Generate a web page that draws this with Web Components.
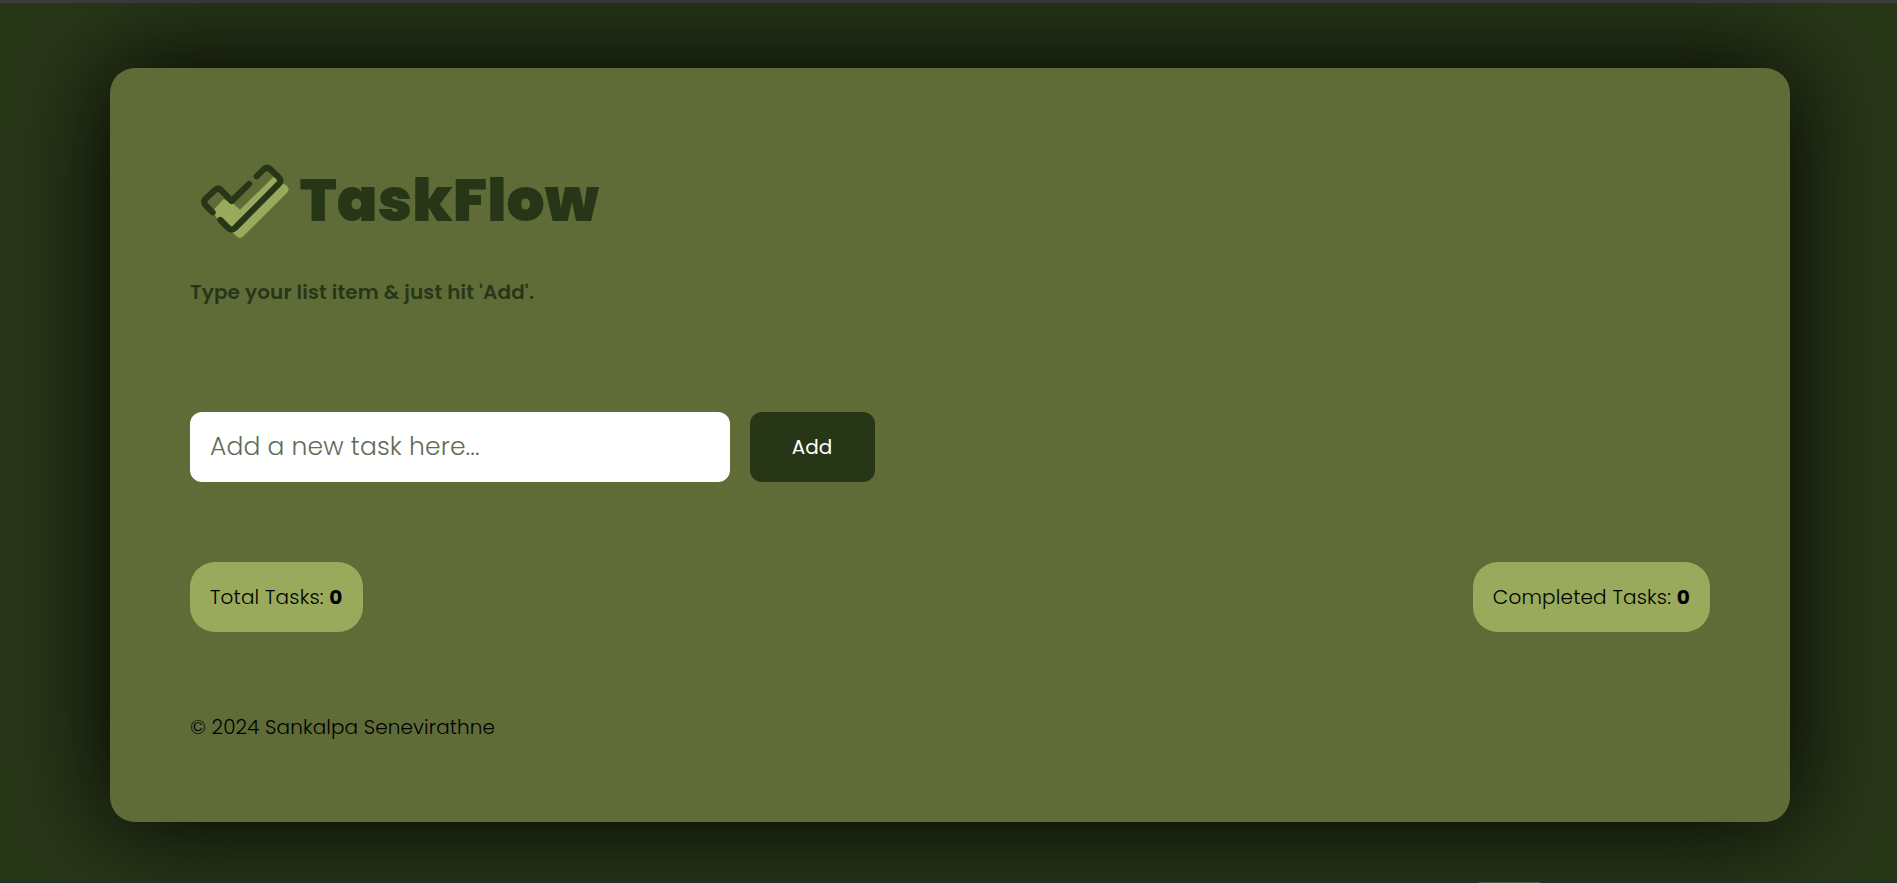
<!DOCTYPE html>
<html lang="en">
<head>
<meta charset="utf-8">
<title>TaskFlow</title>
<style>
html,body{margin:0;height:100%;overflow:hidden;background:#283618}
body{font-family:Poppins,Inter,sans-serif;color:#000}
</style>
</head>
<body>
<task-app></task-app>
<script>
const define=(name,html)=>customElements.define(name,class extends HTMLElement{
  connectedCallback(){
    if(!this.shadowRoot)this.attachShadow({mode:'open'}).innerHTML=html;
  }
});

define('task-logo',`<style>
:host{display:flex;height:100px}
svg{width:130px;height:100px;margin-left:-10px;flex:none}
h1{margin:0 0 0 -10.3px;font-size:60px;font-weight:900;line-height:100px;color:#283618}
</style>
<svg viewBox="0 0 390 300" fill="none" stroke-linecap="round" stroke-linejoin="round">
<path fill="#99aa5c" d="M103 177L130 148L155 157L180 179L281 80L321 108Q331 118 321 128L190 259Q180 269 170 259L110 203Q100 190 103 177Z"/>
<g stroke="#283618" stroke-width="18.5">
<path d="M98 187L77 166Q68 156 77 146L104 121Q114 112 124 121L155 153L207 102"/>
<path d="M230 79L251 58Q261 49 271 58L296 82Q306 92 296 102L165 234Q155 243 145 234L121 210"/>
</g></svg>
<h1>TaskFlow</h1>`);

define('task-entry',`<style>
:host{display:flex;gap:20px;height:70px}
input{box-sizing:border-box;width:540px;height:70px;padding:0 20px;border:0;border-radius:12px;background:#fff;font:300 25px Poppins,Inter,sans-serif;letter-spacing:.16px}
input::placeholder{color:#606c58;opacity:1}
button{width:125px;height:70px;padding:0 1px 0 0;border:0;border-radius:12px;background:#283618;color:#fff;font:400 20px Poppins,Inter,sans-serif;line-height:70px}
</style>
<input placeholder="Add a new task here...">
<button>Add</button>`);

define('task-count',`<style>
:host{display:block;height:70px;padding:0 20px;border-radius:25px;background:#99aa5c;font-size:20px;font-weight:300;letter-spacing:.18px;line-height:70px;white-space:pre}
b{font-weight:700}
</style><slot></slot><b>0</b>`);

define('task-app',`<style>
:host{display:flex;flex-direction:column;height:883px}
.top{height:3px;background:#3c3c3c}
main{box-sizing:border-box;width:1680px;height:754px;margin:65px 0 0 110px;padding:82px 80px 0;border-radius:25px;background:#606c38;box-shadow:0 0 100px #000}
p{margin:0;font-size:20px;line-height:30px;height:30px}
.hint{margin-top:27px;font-weight:600;letter-spacing:.13px;color:#283618}
task-entry{margin-top:105px}
.counts{display:flex;justify-content:space-between;margin-top:80px}
.copy{margin-top:80px;font-weight:300;letter-spacing:.1px}
.edge{height:1px;margin-top:60px;background:#222d32}
.edge i{display:block;width:61px;height:1px;margin-left:1479px;background:#4d5450}
</style>
<div class="top"></div>
<main>
<task-logo></task-logo>
<p class="hint">Type your list item &amp; just hit 'Add'.</p>
<task-entry></task-entry>
<div class="counts">
<task-count>Total Tasks: </task-count>
<task-count>Completed Tasks: </task-count>
</div>
<p class="copy">© 2024 Sankalpa Senevirathne</p>
</main>
<div class="edge"><i></i></div>`);
</script>
</body>
</html>
